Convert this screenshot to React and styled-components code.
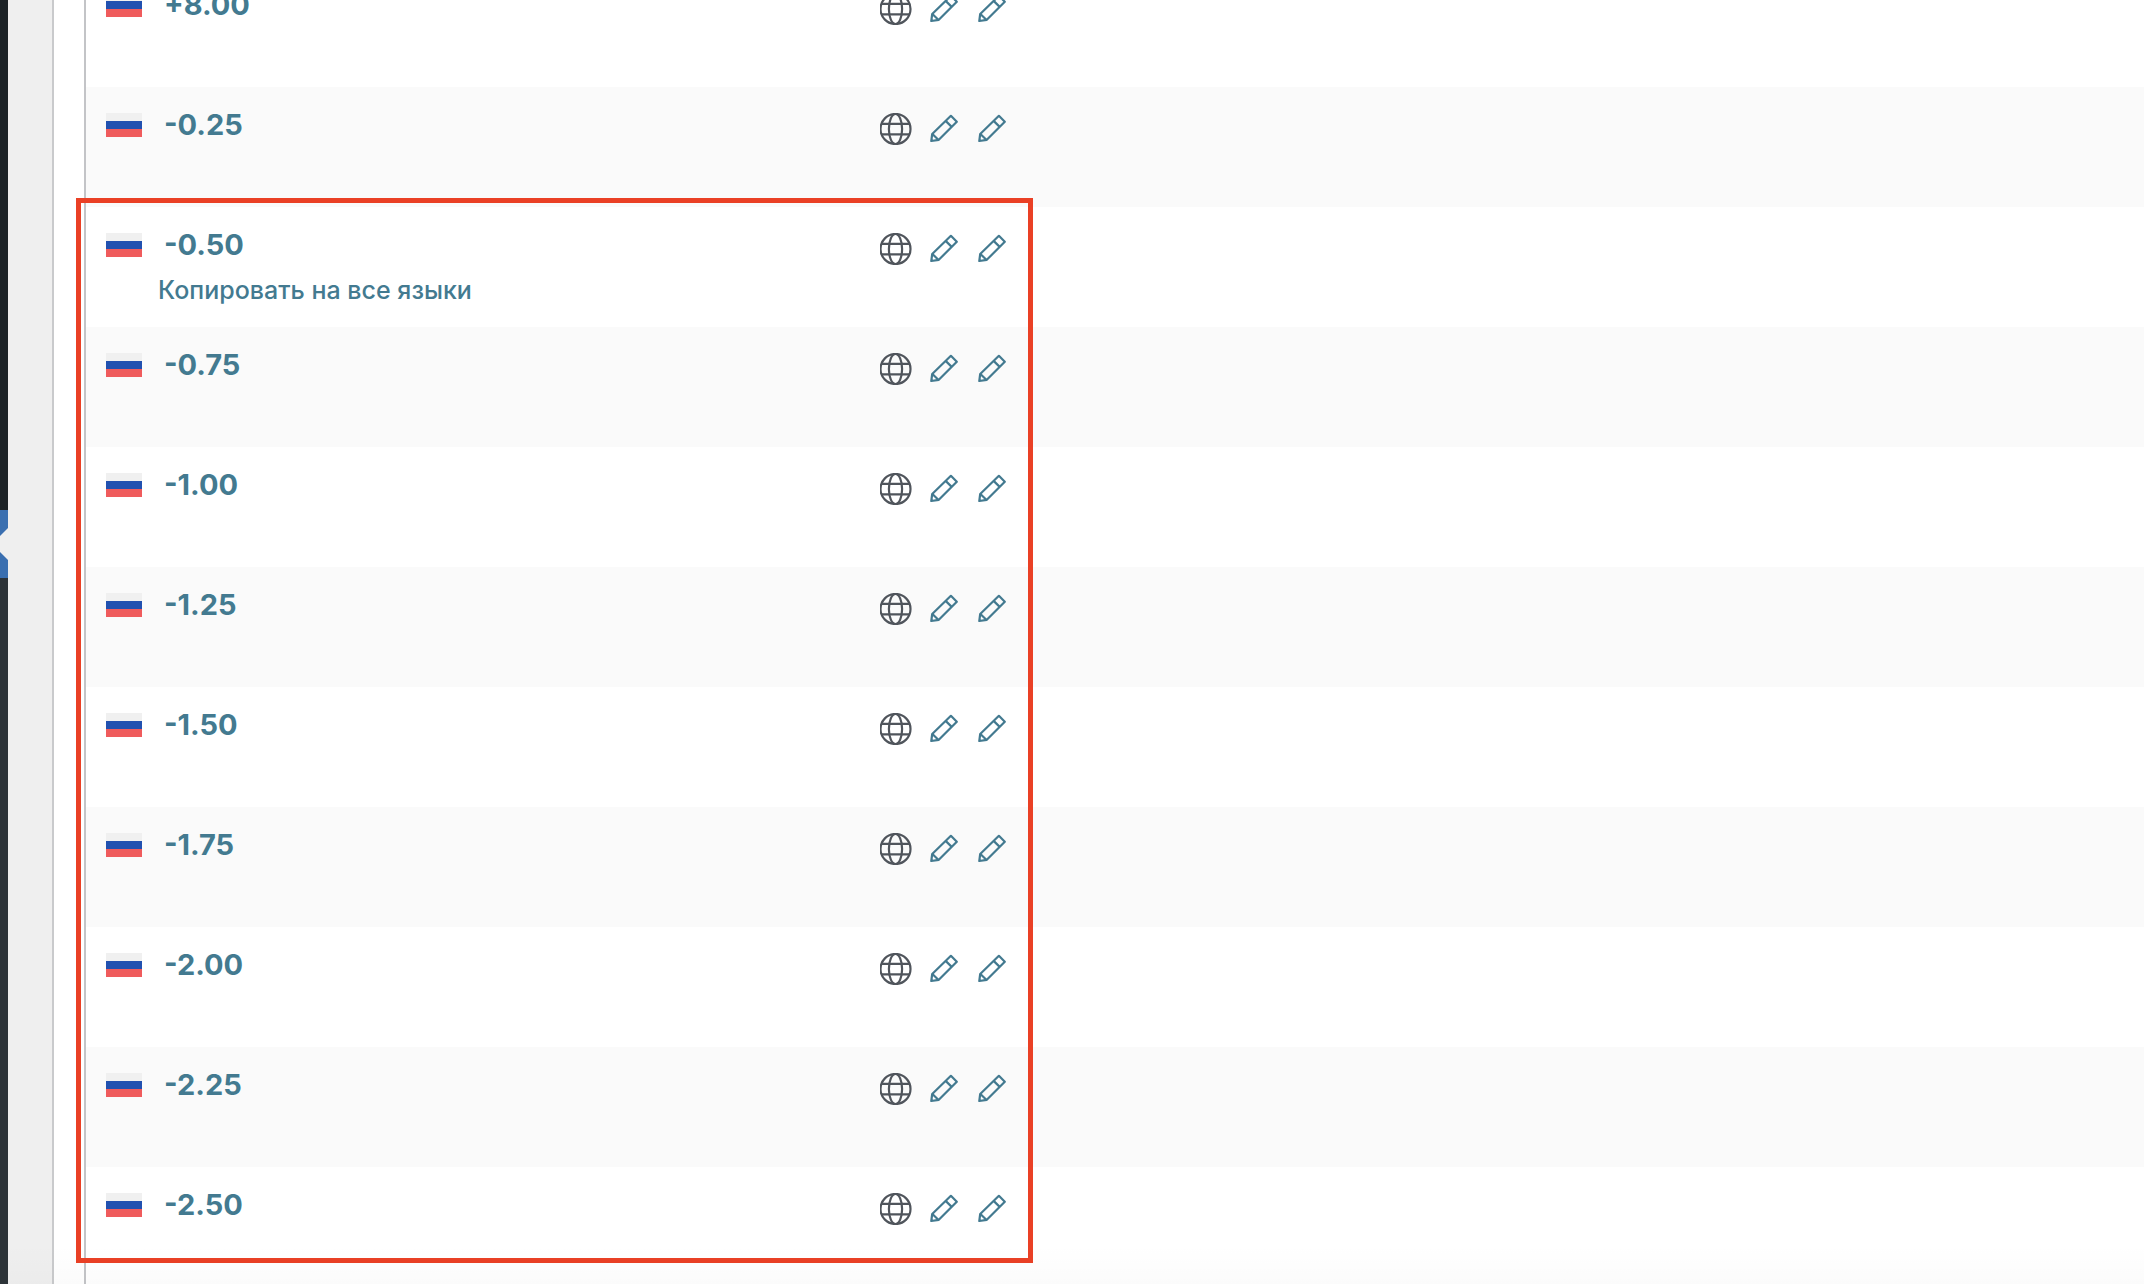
import React from 'react';
import styled, { createGlobalStyle } from 'styled-components';

const GlobalStyle = createGlobalStyle`
  * {
    box-sizing: border-box;
  }

  body {
    margin: 0;
    background: #efefef;
    font-family: Inter, Roboto, 'Liberation Sans', sans-serif;
    overflow: hidden;
  }
`;

const Page = styled.div`
  position: relative;
  display: flex;
  height: 100vh;
  overflow: hidden;

  /* soft shade along the bottom edge */
  &::after {
    content: '';
    position: absolute;
    right: 0;
    bottom: 0;
    left: 8px;
    height: 40px;
    background: linear-gradient(rgba(0, 0, 0, 0), rgba(0, 0, 0, 0.015));
    pointer-events: none;
  }
`;

const Sidebar = styled.nav`
  display: flex;
  flex-direction: column;
  width: 8px;
  flex-shrink: 0;
  background: #1d2327;
`;

const MenuTop = styled.div`
  height: 510px;
`;

const CurrentItem = styled.div`
  position: relative;
  height: 68px;
  background: #3a6fb0;
  overflow: hidden;

  /* arrow that points at the open section */
  &::after {
    content: '';
    position: absolute;
    top: 18px;
    right: 0;
    border: 16px solid transparent;
    border-right-color: #efefef;
  }
`;

const Submenu = styled.div`
  flex: 1;
  background: #2c3338;
`;

const Panel = styled.main`
  flex: 1;
  margin-left: 44px;
  padding-left: 30px;
  border-left: 2px solid #c9cacc;
  background: #fff;
`;

const TableWrap = styled.div`
  position: relative;
  margin-top: -33px;
  border-left: 2px solid #c3c4c7;
`;

const Table = styled.table`
  width: 100%;
  table-layout: fixed;
  border-collapse: collapse;
`;

const Row = styled.tr`
  height: 120px;
  background: ${({ $striped }) => ($striped ? '#fafafa' : '#fff')};
`;

const TitleCell = styled.td`
  width: 786px;
  padding: 20px 20px 0;
  vertical-align: top;
`;

const IconCell = styled.td`
  width: 144px;
  padding: 18px 0 0;
  vertical-align: top;
`;

const EmptyCell = styled.td`
  padding: 0;
`;

const TitleLine = styled.div`
  display: flex;
  align-items: center;
  gap: 22px;
`;

const Flag = styled.svg`
  display: block;
  width: 36px;
  height: 24px;
`;

const Title = styled.a`
  color: #437a90;
  font-size: 29px;
  font-weight: 700;
  line-height: 36px;
  text-decoration: none;
`;

const CopyLink = styled.a`
  display: block;
  margin: 11px 0 0 52px;
  color: #437a90;
  font-size: 25px;
  font-weight: 500;
  line-height: 32px;
  text-decoration: none;
`;

const Icons = styled.div`
  display: flex;
`;

const IconButton = styled.button`
  display: flex;
  align-items: center;
  justify-content: center;
  width: 48px;
  height: 48px;
  padding: 0;
  border: 0;
  background: none;
  color: ${({ $muted }) => ($muted ? '#50555c' : '#437a90')};
  cursor: pointer;
`;

const Highlight = styled.div`
  position: absolute;
  top: 231px;
  left: -10px;
  width: 957px;
  height: 1065px;
  border: 5px solid #ea4025;
  pointer-events: none;
`;

const RussianFlag = () => (
  <Flag viewBox="0 0 36 24" role="img" aria-label="Русский">
    <rect width="36" height="8" fill="#f0f0f0" />
    <rect y="8" width="36" height="8" fill="#2151b0" />
    <rect y="16" width="36" height="8" fill="#ef5b5c" />
  </Flag>
);

const Globe = () => (
  <svg width="32" height="32" viewBox="0 0 32 32" fill="none" stroke="currentColor" strokeWidth="2.2">
    <circle cx="15.5" cy="16" r="15" />
    <ellipse cx="15.5" cy="16" rx="6.6" ry="15" />
    <path d="M1.6 10.8h27.8M1.6 21.4h27.8" />
  </svg>
);

const Pencil = () => (
  <svg
    width="28"
    height="30"
    viewBox="0 0 28 30"
    fill="none"
    stroke="currentColor"
    strokeWidth="2.2"
    strokeLinejoin="round"
  >
    <path d="M20.9 1.8 L26.8 7.7 L8.8 25.8 L1.3 27 L2.2 20 Z" />
    <path d="M15.6 6.9 L21.7 12.9 M2.4 20 L8.6 26" />
  </svg>
);

const terms = [
  { name: '+8.00' },
  { name: '-0.25' },
  { name: '-0.50', hovered: true },
  { name: '-0.75' },
  { name: '-1.00' },
  { name: '-1.25' },
  { name: '-1.50' },
  { name: '-1.75' },
  { name: '-2.00' },
  { name: '-2.25' },
  { name: '-2.50' },
];

const TermRow = ({ name, hovered, striped }) => (
  <Row $striped={striped}>
    <TitleCell>
      <TitleLine>
        <RussianFlag />
        <Title href="#">{name}</Title>
      </TitleLine>
      {hovered && <CopyLink href="#">Копировать на все языки</CopyLink>}
    </TitleCell>
    <IconCell>
      <Icons>
        <IconButton $muted aria-label="Язык оригинала">
          <Globe />
        </IconButton>
        <IconButton aria-label="Редактировать перевод">
          <Pencil />
        </IconButton>
        <IconButton aria-label="Редактировать перевод">
          <Pencil />
        </IconButton>
      </Icons>
    </IconCell>
    <EmptyCell />
  </Row>
);

const App = () => (
  <>
    <GlobalStyle />
    <Page>
      <Sidebar>
        <MenuTop />
        <CurrentItem />
        <Submenu />
      </Sidebar>
      <Panel>
        <TableWrap>
          <Table>
            <tbody>
              {terms.map((term, i) => (
                <TermRow key={term.name} {...term} striped={i % 2 === 1} />
              ))}
            </tbody>
          </Table>
          <Highlight />
        </TableWrap>
      </Panel>
    </Page>
  </>
);

export default App;
